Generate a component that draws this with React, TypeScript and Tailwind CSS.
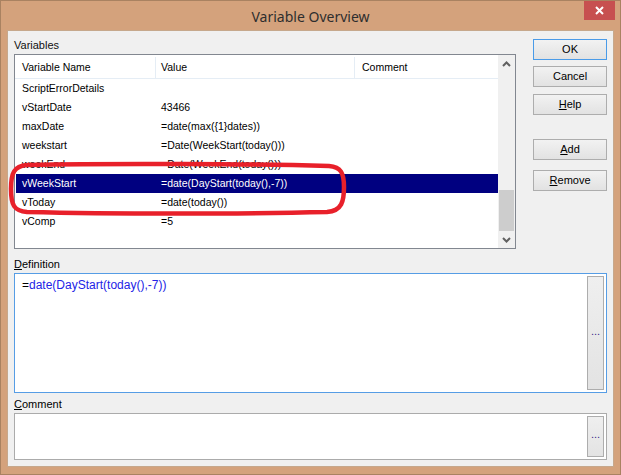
import React from 'react';

const rows: [string, string][] = [
  ['ScriptErrorDetails', ''],
  ['vStartDate', '43466'],
  ['maxDate', '=date(max({1}dates))'],
  ['weekstart', '=Date(WeekStart(today()))'],
  ['weekEnd', '=Date(WeekEnd(today()))'],
  ['vWeekStart', '=date(DayStart(today(),-7))'],
  ['vToday', '=date(today())'],
  ['vComp', '=5'],
];

const ui = { fontFamily: '"Liberation Sans", Arial, sans-serif' };

function DlgButton({ children, focus, className = '' }: { children: React.ReactNode; focus?: boolean; className?: string }) {
  return (
    <button
      className={`h-[21px] w-full border bg-linear-to-b from-[#f2f2f2] to-[#e2e2e2] text-[11px] leading-none text-black ${focus ? 'border-[#4a9be8]' : 'border-[#adadad]'} ${className}`}
      style={ui}
    >
      {children}
    </button>
  );
}

function DotsButton({ className = '' }: { className?: string }) {
  return (
    <div className={`w-[17px] border border-[#adadad] bg-linear-to-b from-[#efefef] to-[#e3e3e3] flex items-center justify-center ${className}`}>
      <span className="text-[11px] leading-none text-[#3a2a8a] -mt-[4px]">...</span>
    </div>
  );
}

function Chevron({ down }: { down?: boolean }) {
  return (
    <svg width="9" height="6" viewBox="0 0 9 6">
      <path d={down ? 'M1 1 L4.5 4.5 L8 1' : 'M1 5 L4.5 1.5 L8 5'} fill="none" stroke="#606060" strokeWidth="2" />
    </svg>
  );
}

export default function App() {
  return (
    <div className="relative w-[621px] h-[475px] bg-[#d4a27c] border border-[#a98261] flex flex-col overflow-hidden" style={ui}>
      {/* title bar */}
      <div className="h-[29px] grid grid-cols-[1fr_auto_1fr] items-start">
        <div />
        <div className="pt-[5px] text-[14px] text-[#2e2e2e]" style={{ fontFamily: '"Noto Sans", "Open Sans", sans-serif' }}>
          Variable Overview
        </div>
        <div className="flex justify-end pr-[5px]">
          <div className="w-[31px] h-[20px] -mt-[1px] bg-[#c75050] flex items-center justify-center">
            <svg width="9" height="9" viewBox="0 0 9 9">
              <path d="M1 1 L8 8 M8 1 L1 8" stroke="#fff" strokeWidth="2" />
            </svg>
          </div>
        </div>
      </div>

      {/* client area */}
      <div className="mx-[6px] h-[437px] bg-[#f0f0f0] border border-[#c6a88c] flex flex-col px-[6px] pt-[8px] pb-[6px] text-[11px] text-black">
        <div className="flex">
          <div className="w-[503px] flex flex-col">
            <div className="h-[15px] leading-[13px] text-[#111]">Variables</div>
            <div className="h-[195px] border border-[#828790] bg-white flex text-[10.5px]">
              <div className="flex-1 flex flex-col overflow-hidden">
                <div className="h-[24px] pt-[2px] flex border-b border-[#e5edf5] shrink-0">
                  <div className="w-[141px] pl-[7px] flex items-center border-r border-[#e5edf5]">Variable Name</div>
                  <div className="w-[199px] pl-[5px] flex items-center border-r border-[#e5edf5]">Value</div>
                  <div className="flex-1 pl-[7px] flex items-center">Comment</div>
                </div>
                {rows.map(([name, value]) => {
                  const sel = name === 'vWeekStart';
                  return (
                    <div key={name} className={`h-[19px] flex items-center shrink-0 ml-[1px] ${sel ? 'bg-[#000080] text-white' : ''}`}>
                      <div className="w-[140px] pl-[6px]">{name}</div>
                      <div className="w-[199px] pl-[5px]">{value}</div>
                    </div>
                  );
                })}
              </div>
              <div className="w-[17px] bg-[#f0f0f0] flex flex-col">
                <div className="h-[17px] flex items-center justify-center shrink-0"><Chevron /></div>
                <div className="flex-1 flex flex-col px-[1px]">
                  <div className="mt-auto h-[41px] bg-[#cdcdcd]" />
                </div>
                <div className="h-[17px] flex items-center justify-center shrink-0"><Chevron down /></div>
              </div>
            </div>
          </div>
          <div className="ml-[17px] w-[74px] flex flex-col">
            <DlgButton focus>OK</DlgButton>
            <DlgButton className="mt-[6px]">Cancel</DlgButton>
            <DlgButton className="mt-[7px]"><span className="underline">H</span>elp</DlgButton>
            <DlgButton className="mt-[24px]"><span className="underline">A</span>dd</DlgButton>
            <DlgButton className="mt-[10px]"><span className="underline">R</span>emove</DlgButton>
          </div>
        </div>

        <div className="mt-[8px] h-[15px] leading-[15px]"><span className="underline">D</span>efinition</div>
        <div className="mt-[1px] h-[120px] border border-[#569de5] bg-white flex">
          <div className="flex-1 pl-[7px] pt-[4px] text-[12px] leading-[15px]" style={{ fontFamily: 'Arial, "Liberation Sans", sans-serif' }}>
            <span className="text-black">=</span>
            <span className="text-[#2323e6]">date(DayStart(today(),-7))</span>
          </div>
          <DotsButton className="my-[2px] mr-[2px]" />
        </div>

        <div className="mt-[4px] h-[15px] leading-[15px]"><span className="underline">C</span>omment</div>
        <div className="mt-[1px] h-[47px] border border-[#ababab] bg-white flex">
          <div className="flex-1" />
          <DotsButton className="my-[2px] mr-[2px]" />
        </div>
      </div>

      {/* hand-drawn red highlight annotation */}
      <svg className="absolute left-0 top-0 pointer-events-none" width="621" height="475">
        <path
          d="M26 164 C120 162 250 163 328 165 C340 166 343 172 343 186 C343 200 341 210 326 211 C240 213 110 213 26 211 C13 210 10 204 10 188 C10 172 13 165 26 164 Z"
          fill="none"
          stroke="#e8202a"
          strokeWidth="4.5"
        />
      </svg>
    </div>
  );
}
